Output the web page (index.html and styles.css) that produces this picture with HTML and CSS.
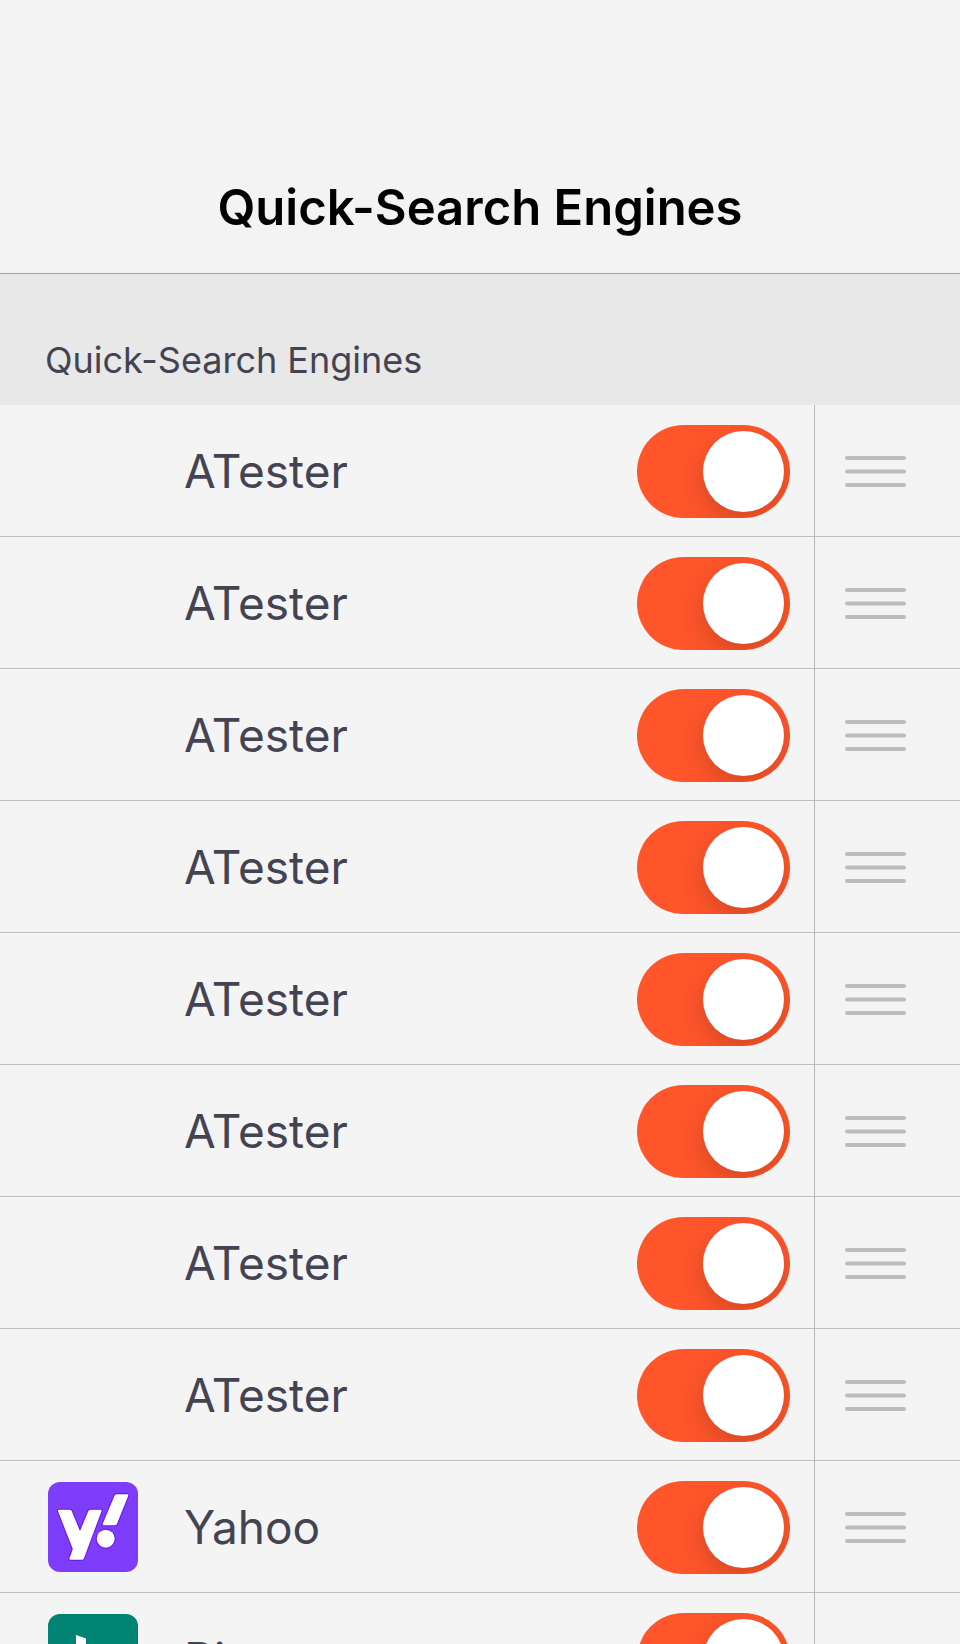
FILE: index.html
```
<!DOCTYPE html>
<html lang="en">
<head>
<meta charset="utf-8">
<meta name="viewport" content="width=device-width, initial-scale=1">
<title>Quick-Search Engines</title>
<link rel="stylesheet" href="styles.css">
<script src="app.js" defer></script>
</head>
<body>
<div class="screen">
  <header class="navbar"><h1 class="navbar-title">Quick-Search Engines</h1></header>
  <main class="content">
    <h2 class="section-title">Quick-Search Engines</h2>
    <ul class="engines" id="engines"></ul>
  </main>
</div>
<template id="icon-yahoo">
  <svg viewBox="0 0 90 90" aria-hidden="true">
    <rect width="90" height="90" rx="12" fill="#7d3dfb"/>
    <g fill="#fff" stroke="#6a10f0" stroke-width="2" stroke-linejoin="round" paint-order="stroke">
      <path d="M11 27.7H22q1.200 0 1.800 1.500L32 49l8.200-19.800q.600-1.500 1.800-1.500H52.500q1.600 0 1 1.500L36 76.200q-.600 1.500-1.800 1.500H22.500q-1.600 0-1-1.500L24.800 67 10 29.200q-.600-1.500 1-1.500z"/>
      <path d="M68.500 12.300H79.500q1.400 0 .800 1.500L69 41.800q-.600 1.500-2 1.500H55.500q-1.400 0-.800-1.500L66.500 13.800q.600-1.500 2-1.500z"/>
      <circle cx="57.700" cy="56.700" r="9"/>
    </g>
  </svg>
</template>
<template id="icon-bing">
  <svg viewBox="0 0 90 90" aria-hidden="true">
    <rect width="90" height="90" rx="12" fill="#008373"/>
    <path d="M28 21l10 3.500V60l14-8-7-3.300-4.400-11L63 45.500V57L38 71.500 28 66z" fill="#fff"/>
  </svg>
</template>
</body>
</html>
```
FILE: styles.css
```
* { box-sizing: border-box; }

body {
  margin: 0;
  background: #f4f4f4;
  color: #444352;
  font-family: Inter, "Liberation Sans", sans-serif;
}

.screen {
  display: flex;
  flex-direction: column;
  height: 100vh;
  overflow: hidden;
}

.navbar {
  flex: none;
  padding: 176px 48px 33px;
  border-bottom: 1px solid #a2a2a2;
  background: #f3f3f3;
  text-align: center;
}

.navbar-title {
  margin: 0;
  color: #000;
  font-size: 49px;
  font-weight: 600;
  line-height: 64px;
}

.content {
  flex: 1;
  min-height: 0;
  overflow: hidden;
}

.section-title {
  margin: 0;
  padding: 64px 45px 23px;
  background: #e8e8e8;
  font-size: 36px;
  font-weight: 400;
  line-height: 44px;
}

.engines {
  margin: 0;
  padding: 0;
  list-style: none;
}

.engine {
  display: flex;
  align-items: stretch;
  height: 132px;
  border-bottom: 1px solid #bfbfbf;
}

.engine-main {
  display: flex;
  flex: 1;
  align-items: center;
  padding: 1px 24px 0 48px;
}

.engine-icon {
  flex: none;
  width: 90px;
  height: 90px;
  margin-right: 46px;
}

.engine-icon svg { display: block; }

.engine-name {
  flex: 1;
  font-size: 46px;
  line-height: 60px;
}

.switch {
  flex: none;
  appearance: none;
  width: 153px;
  height: 93px;
  margin: 0;
  padding: 6px;
  border-radius: 47px;
  background: #fe552b;
  overflow: hidden;
  cursor: pointer;
}

.switch::before {
  content: "";
  display: block;
  width: 81px;
  height: 81px;
  border-radius: 50%;
  background: #fff;
  box-shadow: 0 9px 24px rgba(0, 0, 0, 0.16);
}

.switch:checked::before { margin-left: auto; }
.switch:not(:checked) { background: #d8d8d8; }

.handle {
  display: flex;
  flex: none;
  align-items: center;
  width: 146px;
  padding: 1px 0 0 30px;
  border: 0;
  border-left: 1px solid #b9b9b9;
  background: none;
  cursor: grab;
}

.handle svg { display: block; }
```
FILE: app.js
```
const engines = [
  ...Array.from({ length: 8 }, () => ({ name: "ATester" })),
  { name: "Yahoo", icon: "icon-yahoo" },
  { name: "Bing", icon: "icon-bing" },
];

const list = document.getElementById("engines");

engines.forEach((engine, i) => {
  const row = document.createElement("li");
  row.className = "engine";
  row.innerHTML = `
    <div class="engine-main">
      <span class="engine-icon"></span>
      <label class="engine-name" for="engine-${i}">${engine.name}</label>
      <input class="switch" type="checkbox" role="switch" id="engine-${i}" checked>
    </div>
    <button class="handle" type="button" aria-label="Reorder ${engine.name}">
      <svg width="61" height="31" viewBox="0 0 61 31" fill="#bcbcbc" aria-hidden="true">
        <rect width="61" height="4" rx="2"/>
        <rect y="13.5" width="61" height="4" rx="2"/>
        <rect y="27" width="61" height="4" rx="2"/>
      </svg>
    </button>`;
  if (engine.icon) {
    const icon = document.getElementById(engine.icon).content.cloneNode(true);
    row.querySelector(".engine-icon").append(icon);
  }
  list.append(row);
});
```
